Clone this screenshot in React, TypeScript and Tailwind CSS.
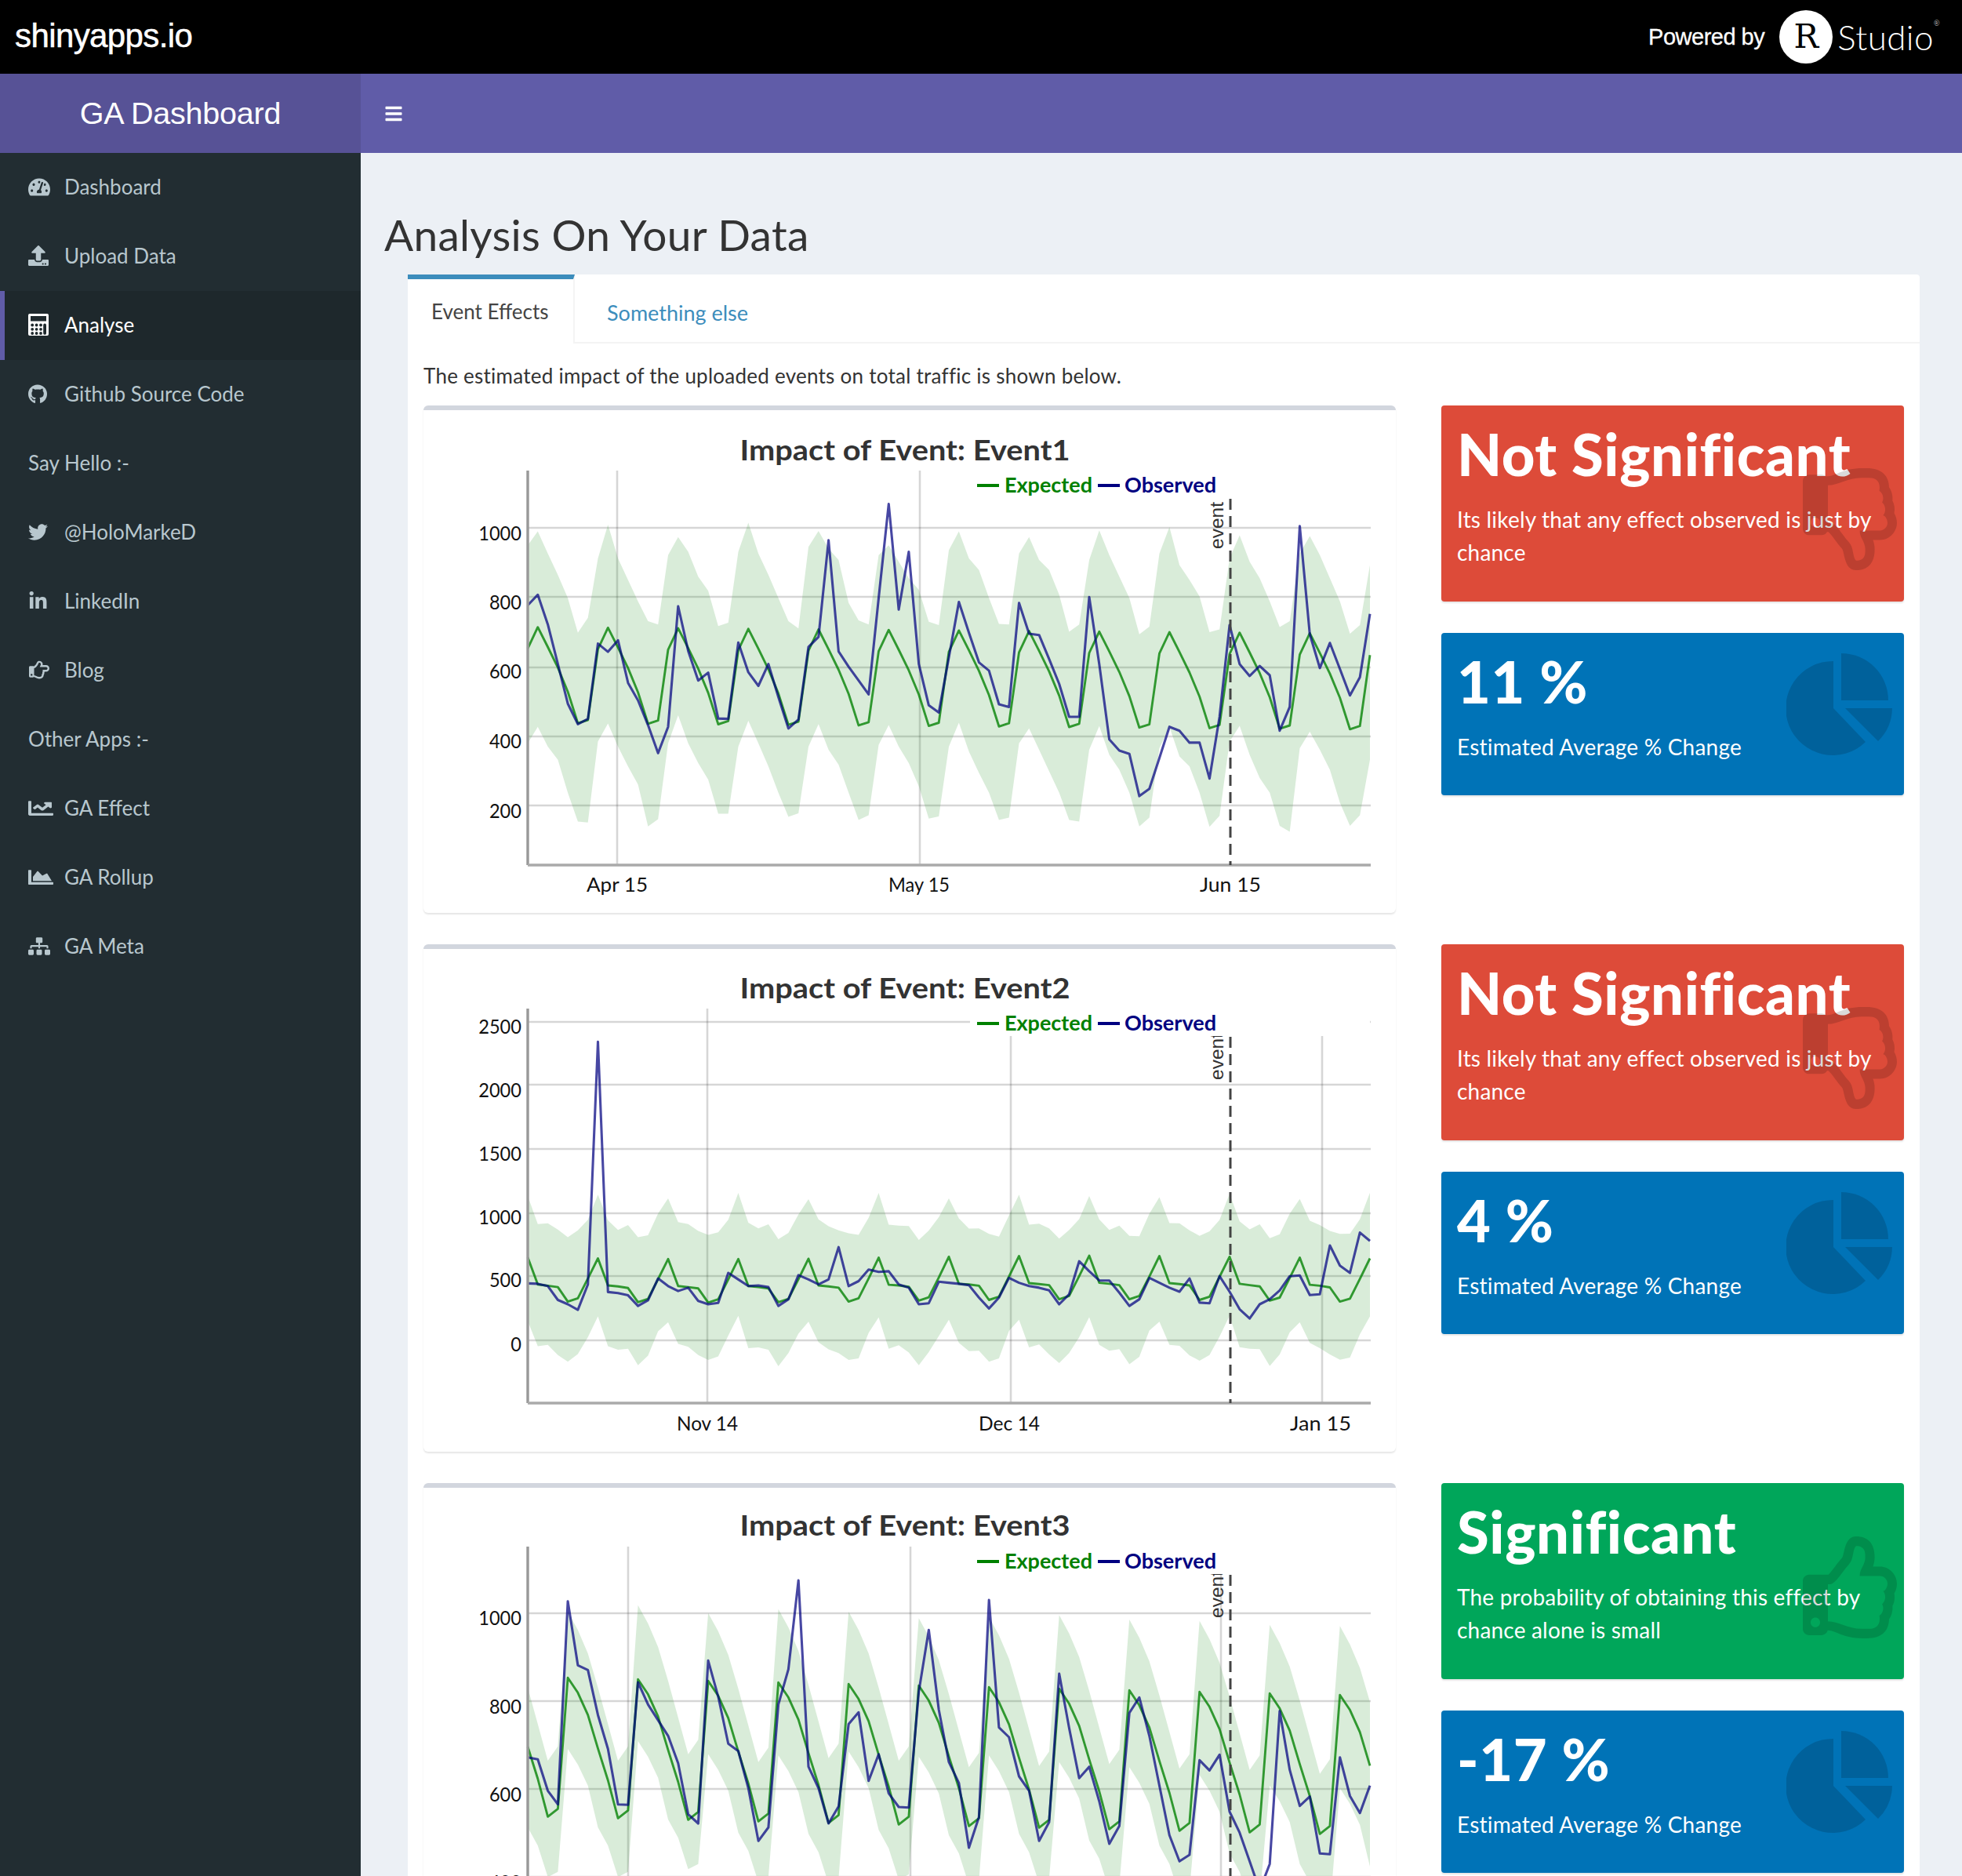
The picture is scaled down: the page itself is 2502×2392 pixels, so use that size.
import type { ReactNode } from "react";
import {
  FaTachometerAlt,
  FaUpload,
  FaGithub,
  FaTwitter,
  FaLinkedinIn,
  FaRegHandPointRight,
  FaChartLine,
  FaChartArea,
  FaSitemap,
  FaBars,
  FaRegThumbsDown,
  FaRegThumbsUp,
} from "react-icons/fa";

// Series were read off the reference, in crop coordinates; each chart maps them to page pixels.
const STEP = 12.786;
const LEFT = 673;

const obs1 = [622, 590, 680, 800, 920, 982, 966, 738, 763, 728, 857, 910, 985, 1070, 990, 625, 760, 850, 826, 965, 966, 735, 825, 866, 800, 900, 995, 968, 748, 718, 425, 762, 808, 850, 892, 600, 315, 635, 460, 800, 925, 947, 780, 612, 705, 795, 820, 922, 930, 615, 708, 712, 785, 860, 960, 960, 597, 800, 1028, 1062, 1072, 1200, 1178, 1085, 990, 1002, 1038, 1038, 1147, 960, 682, 800, 836, 806, 834, 1002, 930, 382, 710, 812, 736, 815, 895, 840, 648];
const up1 = [440, 398, 465, 530, 600, 705, 660, 480, 378, 480, 545, 610, 670, 680, 470, 415, 460, 535, 578, 685, 675, 460, 372, 465, 530, 600, 670, 692, 445, 397, 450, 485, 615, 668, 680, 470, 440, 490, 540, 575, 672, 682, 455, 398, 480, 515, 600, 678, 680, 465, 415, 485, 515, 590, 702, 680, 485, 395, 470, 535, 600, 710, 687, 465, 385, 500, 545, 595, 703, 695, 480, 410, 490, 540, 610, 688, 670, 465, 412, 470, 540, 610, 708, 682, 500];
const low1 = [1040, 990, 1050, 1090, 1190, 1277, 1280, 1035, 980, 1050, 1110, 1165, 1292, 1270, 1040, 955, 1040, 1100, 1150, 1253, 1253, 1050, 972, 1040, 1110, 1190, 1263, 1252, 1050, 982, 1060, 1105, 1190, 1272, 1258, 1045, 985, 1050, 1100, 1170, 1268, 1262, 1050, 978, 1065, 1130, 1190, 1272, 1265, 1040, 995, 1060, 1125, 1190, 1272, 1277, 1060, 988, 1075, 1120, 1190, 1292, 1265, 1055, 990, 1080, 1110, 1190, 1293, 1260, 1035, 987, 1075, 1145, 1190, 1290, 1308, 1055, 1005, 1060, 1120, 1220, 1290, 1258, 1090];
const exp1 = Array.from({ length: 85 }, (_, i) => {
  const peak = 688 + (i / 84) * 20;
  return peak + [0, 60, 122, 195, 290, 280, 65][(i + 6) % 7];
});

const obs2 = [1037, 1038, 1045, 1087, 1100, 1117, 1040, 305, 1063, 1066, 1073, 1105, 1088, 1022, 1045, 1060, 1050, 1090, 1100, 1096, 1005, 1025, 1045, 1043, 1048, 1105, 1085, 1012, 1025, 1040, 1025, 927, 1045, 1030, 995, 1002, 1000, 1040, 1050, 1100, 1097, 1032, 1035, 1038, 1042, 1080, 1113, 1080, 1020, 1035, 1045, 1050, 1058, 1100, 1070, 970, 1000, 1028, 1028, 1065, 1105, 1085, 1020, 1035, 1050, 1062, 1022, 1095, 1097, 1015, 1062, 1115, 1143, 1100, 1085, 1058, 1015, 1013, 1072, 1070, 922, 983, 1005, 883, 908];
const wiggle = (i: number) => Math.round(Math.sin(i * 2.3) * 10);
const exp2 = Array.from({ length: 85 }, (_, i) => [958, 1040, 1043, 1047, 1090, 1080, 1020][i % 7] + Math.round(Math.sin(i / 12) * 5));
const up2 = Array.from({ length: 85 }, (_, i) => [772, 850, 865, 868, 895, 885, 835][i % 7] + wiggle(i));
const low2 = Array.from({ length: 85 }, (_, i) => [1145, 1225, 1232, 1245, 1278, 1255, 1190][i % 7] + wiggle(i + 3));

const obs3 = [1082, 1090, 1210, 1262, 485, 730, 748, 920, 1050, 1262, 1264, 795, 880, 940, 1000, 1105, 1300, 1335, 712, 850, 1030, 1058, 1200, 1402, 1350, 880, 745, 405, 1118, 1200, 1335, 1270, 955, 910, 1172, 1070, 1220, 1272, 1274, 830, 595, 900, 1100, 1180, 1428, 1310, 480, 968, 1005, 1155, 1210, 1402, 1330, 762, 970, 1162, 1118, 1250, 1413, 1345, 912, 853, 1000, 1190, 1380, 1480, 1455, 1093, 1132, 1072, 1290, 1370, 1480, 1590, 1490, 905, 1130, 1268, 1232, 1450, 1453, 1082, 1230, 1295, 1190];
const exp3 = Array.from({ length: 85 }, (_, i) => {
  const week = Math.floor((i + 3) / 7);
  const peak = 772 + week * 6;
  return peak + [0, 57, 142, 270, 392, 537, 507][(i + 3) % 7];
});
const up3 = Array.from({ length: 85 }, (_, i) => {
  const week = Math.floor((i + 3) / 7);
  const peak = [525, 525, 500, 530, 515, 525, 550, 545, 538, 555, 560, 575, 580][week];
  return peak + [0, 70, 160, 290, 430, 570, 515][(i + 3) % 7];
});
const low3 = Array.from({ length: 85 }, (_, i) => {
  const week = Math.floor((i + 3) / 7);
  const peak = [1050, 1050, 1020, 1070, 1075, 1060, 1080, 1075, 1100, 1120, 1150, 1190, 1200][week];
  return peak + [0, 60, 140, 300, 370, 490, 470][(i + 3) % 7];
});

const points = (vals: number[], toY: (z: number) => number) =>
  vals.map((v, i) => `${(LEFT + i * STEP).toFixed(1)},${toY(v).toFixed(1)}`).join(" ");

type ChartProps = {
  title: string;
  top: number;
  plotTop: number;
  plotBottom: number;
  titleBase: number;
  legendY: number;
  toY: (z: number) => number;
  grid: [number, string, number][];
  dates: number[];
  ticks: [number, string][];
  tickY: number;
  eventBase: number;
  upper: number[];
  lower: number[];
  expected: number[];
  observed: number[];
};

function Chart(p: ChartProps) {
  const lowerPts = p.lower.map((v, i) => `${(LEFT + i * STEP).toFixed(1)},${p.toY(v).toFixed(1)}`).reverse().join(" ");
  const bandPts = points(p.upper, p.toY) + " " + lowerPts;
  const lab = "[font-family:Lato,sans-serif]";
  return (
    <svg viewBox={`540 ${p.top + 6} 1240 641`} className="block w-[1240px] h-[641px]">
      <g className="blur-[0.6px]">
        {p.grid.map(([y]) => (
          <line key={y} x1={LEFT} x2={1748} y1={y} y2={y} stroke="#000" strokeOpacity="0.16" strokeWidth="2.6" />
        ))}
        {p.dates.map((x) => (
          <line key={x} x1={x} x2={x} y1={p.plotTop} y2={p.plotBottom} stroke="#000" strokeOpacity="0.16" strokeWidth="2.6" />
        ))}
        <polygon points={bandPts} fill="#008000" fillOpacity="0.15" />
      </g>
      <text transform={`translate(1560 ${p.eventBase}) rotate(-90)`} fill="#333" fontSize="24.5" className="[font-family:'Liberation_Sans',sans-serif]">
        event
      </text>
      <rect x="1237" y={p.plotTop - 2} width="510" height="37" fill="#fff" />
      <g className="blur-[0.5px]">
        <polyline points={points(p.expected, p.toY)} fill="none" stroke="#008000" strokeOpacity="0.78" strokeWidth="2.9" strokeLinejoin="round" />
        <polyline points={points(p.observed, p.toY)} fill="none" stroke="#000080" strokeOpacity="0.72" strokeWidth="3.1" strokeLinejoin="round" />
        <line x1={LEFT} x2={LEFT} y1={p.plotTop} y2={p.plotBottom} stroke="#999" strokeWidth="3.4" />
        <line x1={LEFT} x2={1748} y1={p.plotBottom} y2={p.plotBottom} stroke="#aaa" strokeWidth="3.4" />
        <line x1="1569" x2="1569" y1={p.plotTop + 36} y2={p.plotBottom} stroke="#444" strokeWidth="3" strokeDasharray="14 8" />
      </g>

      <text x="1154" y={p.titleBase} textAnchor="middle" textLength="421" lengthAdjust="spacingAndGlyphs" fill="#333" fontSize="37" fontWeight="700" className={lab}>
        {p.title}
      </text>

      <line x1="1246" x2="1274" y1={p.legendY} y2={p.legendY} stroke="#008000" strokeWidth="4" />
      <text x="1281" y={p.legendY + 9} textLength="112" lengthAdjust="spacingAndGlyphs" fill="#008000" fontSize="26" fontWeight="700" className={lab}>
        Expected
      </text>
      <line x1="1400" x2="1428" y1={p.legendY} y2={p.legendY} stroke="#000080" strokeWidth="4" />
      <text x="1434" y={p.legendY + 9} textLength="117" lengthAdjust="spacingAndGlyphs" fill="#000080" fontSize="26" fontWeight="700" className={lab}>
        Observed
      </text>

      {p.grid.map(([, label, base]) => (
        <text key={label} x="665" y={base} textAnchor="end" textLength={label.length * 13.7} lengthAdjust="spacingAndGlyphs" fill="#111" fontSize="25" className={lab}>
          {label}
        </text>
      ))}
      {p.ticks.map(([x, label]) => (
        <text key={label} x={x} y={p.tickY} textAnchor="middle" textLength="78" lengthAdjust="spacingAndGlyphs" fill="#111" fontSize="25" className={lab}>
          {label}
        </text>
      ))}
    </svg>
  );
}

function ChartBox(props: ChartProps) {
  return (
    <div className="h-[647px] w-[1240px] shrink-0 bg-white rounded-[6px] border-t-[6px] border-[#d2d6de] shadow-[0_2px_2px_rgba(0,0,0,0.1)] overflow-hidden">
      <Chart {...props} />
    </div>
  );
}

function PieIcon() {
  return (
    <svg viewBox="2278 833 135 131" className="absolute right-[15px] top-[26px] w-[135px] h-[131px]" fill="#000" fillOpacity="0.15">
      <path d="M2338 903 L2338 843 A60 60 0 1 0 2379 946 Z" />
      <path d="M2348 893 V833 A60 60 0 0 1 2408 893 Z" />
      <path d="M2353 903 H2413 A60 60 0 0 1 2395 945 Z" />
    </svg>
  );
}

function CalculatorIcon() {
  const dots = [];
  for (const cy of [14.5, 19.8, 25]) {
    for (const cx of [5.2, 10.6, 16]) {
      dots.push(<circle key={`${cx}-${cy}`} cx={cx} cy={cy} r="1.9" />);
    }
  }
  return (
    <svg viewBox="0 0 26 28" className="w-[26px] h-[28px]">
      <rect width="26" height="28" rx="2" fill="#fff" />
      <g fill="#1e282c">
        <rect x="3" y="3" width="20" height="6.5" />
        {dots}
        <rect x="19.2" y="12.6" width="3.8" height="14.2" rx="1.9" />
      </g>
    </svg>
  );
}

function SmallBox({ bg, head, text, height, icon }: { bg: string; head: string; text: string; height: string; icon: ReactNode }) {
  return (
    <div className={`relative rounded-[4px] px-[20px] pt-[20px] text-white shadow-[0_2px_2px_rgba(0,0,0,0.1)] overflow-hidden ${bg} ${height}`}>
      <h3 className="text-[74px] font-black leading-[84px] mb-[20px] whitespace-nowrap tracking-[0.6px]">{head}</h3>
      <p className="text-[28px] leading-[42px] tracking-[0.2px]">{text}</p>
      {icon}
    </div>
  );
}

const thumbDown = <FaRegThumbsDown preserveAspectRatio="none" className="absolute right-[1px] top-[80px] w-[128px] h-[130px] text-black/15" />;
const thumbUp = <FaRegThumbsUp preserveAspectRatio="none" className="absolute right-[1px] top-[68px] w-[128px] h-[130px] text-black/15" />;

function Stats({ sig, text, bg, pct, icon }: { sig: string; text: string; bg: string; pct: string; icon: ReactNode }) {
  return (
    <div className="h-[647px] w-[590px] shrink-0 flex flex-col gap-[40px]">
      <SmallBox bg={bg} head={sig} text={text} height="h-[249.5px]" icon={icon} />
      <SmallBox bg="bg-[#0073b7]" head={pct} text="Estimated Average % Change" height="h-[207px]" icon={<PieIcon />} />
    </div>
  );
}

const navItems: { label: string; icon?: ReactNode; active?: boolean }[] = [
  { label: "Dashboard", icon: <FaTachometerAlt className="w-[28px] h-[25px]" /> },
  { label: "Upload Data", icon: <FaUpload className="w-[26px] h-[26px]" /> },
  { label: "Analyse", icon: <CalculatorIcon />, active: true },
  { label: "Github Source Code", icon: <FaGithub className="w-[24px] h-[25px]" /> },
  { label: "Say Hello :-" },
  { label: "@HoloMarkeD", icon: <FaTwitter className="w-[25px] h-[25px]" /> },
  { label: "LinkedIn", icon: <FaLinkedinIn className="w-[25px] h-[25px]" /> },
  { label: "Blog", icon: <FaRegHandPointRight className="w-[28px] h-[26px]" /> },
  { label: "Other Apps :-" },
  { label: "GA Effect", icon: <FaChartLine preserveAspectRatio="none" className="w-[32px] h-[25px]" /> },
  { label: "GA Rollup", icon: <FaChartArea preserveAspectRatio="none" className="w-[32px] h-[25px]" /> },
  { label: "GA Meta", icon: <FaSitemap className="w-[28px] h-[25px]" /> },
];

export default function App() {
  return (
    <div className="w-[2502px] h-[2392px] overflow-hidden flex flex-col bg-[#ecf0f5] [font-family:Lato,sans-serif]">
      {/* shinyapps banner */}
      <div className="h-[94px] shrink-0 bg-black text-white flex items-center justify-between pl-[19px] pr-[28px] [font-family:'Liberation_Sans',sans-serif]">
        <span className="text-[42px] leading-none tracking-[-0.6px] font-medium [-webkit-text-stroke:0.5px_white] pb-[2px]">shinyapps.io</span>
        <div className="flex items-center">
          <span className="text-[29px] leading-none tracking-[-0.5px] mr-[19px] [-webkit-text-stroke:0.3px_white]">Powered by</span>
          <span className="w-[68px] h-[68px] rounded-full bg-white text-black flex items-center justify-center text-[42px] leading-none [font-family:'DejaVu_Serif',serif]">R</span>
          <span className="ml-[6px] text-[44px] leading-none font-light tracking-[0.4px] [font-family:Lato,sans-serif]">
            Studio<span className="text-[9px] align-top">®</span>
          </span>
        </div>
      </div>

      {/* app header */}
      <div className="h-[101px] shrink-0 flex text-white">
        <div className="w-[460px] bg-[#575296] flex items-center justify-center text-[39.5px] [font-family:'Liberation_Sans',sans-serif] tracking-[-0.2px]">
          GA Dashboard
        </div>
        <div className="flex-1 bg-[#605ca8] flex items-center pl-[30px]">
          <FaBars className="w-[24px] h-[24px]" />
        </div>
      </div>

      <div className="flex flex-1 min-h-0">
        {/* sidebar */}
        <nav className="w-[460px] shrink-0 bg-[#222d32] text-[#b8c7ce] text-[26px]">
          {navItems.map((item) => (
            <div key={item.label} className={`h-[88px] pb-[2px] flex items-center ${item.active ? "bg-[#1e282c] text-white border-l-[6px] border-[#605ca8] pl-[30px]" : "pl-[36px]"}`}>
              {item.icon ? <span className="w-[46px] shrink-0 flex items-center">{item.icon}</span> : null}
              <span>{item.label}</span>
            </div>
          ))}
        </nav>

        {/* content */}
        <main className="flex-1 min-w-0">
          <h1 className="h-[155px] pl-[30px] pt-[75px] text-[55px] leading-[58px] tracking-[0.3px] text-[#333]">Analysis On Your Data</h1>
          <div className="ml-[60px] mr-[54px] bg-white rounded-t-[4px]">
            <div className="h-[88px] flex border-b-2 border-[#f4f4f4]">
              <div className="w-[213px] h-[88px] border-t-[6px] border-r-2 border-[#3c8dbc] [border-right-color:#f4f4f4] bg-white flex items-center pl-[30px] text-[26px] text-[#444]">
                Event Effects
              </div>
              <div className="pl-[41px] pt-[12px] flex items-center text-[27px] text-[#3c8dbc]">Something else</div>
            </div>
            <div className="px-[20px] pt-[21px]">
              <p className="text-[26px] leading-[40px] tracking-[0.25px] text-[#333] mb-[18px]">The estimated impact of the uploaded events on total traffic is shown below.</p>
              <div className="flex flex-col gap-[40px]">
                <div className="flex gap-[58px]">
                  <ChartBox
                    title="Impact of Event: Event1"
                    top={517}
                    plotTop={600}
                    plotBottom={1103}
                    titleBase={587}
                    legendY={619}
                    toY={(z) => 510 + z / 2.376}
                    grid={[[673, "1000", 689], [761, "800", 777], [851, "600", 865], [939, "400", 954], [1027, "200", 1043]]}
                    dates={[787, 1173]}
                    ticks={[[787, "Apr 15"], [1172, "May 15"], [1569, "Jun 15"]]}
                    tickY={1137}
                    eventBase={700}
                    upper={up1}
                    lower={low1}
                    expected={exp1}
                    observed={obs1}
                  />
                  <Stats sig="Not Significant" text="Its likely that any effect observed is just by chance" bg="bg-[#dd4b39]" pct="11 %" icon={thumbDown} />
                </div>
                <div className="flex gap-[58px]">
                  <ChartBox
                    title="Impact of Event: Event2"
                    top={1204}
                    plotTop={1286}
                    plotBottom={1789}
                    titleBase={1273}
                    legendY={1305}
                    toY={(z) => 1200 + z / 2.376}
                    grid={[[1303, "2500", 1318], [1383, "2000", 1399], [1465, "1500", 1480], [1547, "1000", 1561], [1627, "500", 1641], [1709, "0", 1723]]}
                    dates={[902, 1289, 1686]}
                    ticks={[[902, "Nov 14"], [1287, "Dec 14"], [1684, "Jan 15"]]}
                    tickY={1824}
                    eventBase={1377}
                    upper={up2}
                    lower={low2}
                    expected={exp2}
                    observed={obs2}
                  />
                  <Stats sig="Not Significant" text="Its likely that any effect observed is just by chance" bg="bg-[#dd4b39]" pct="4 %" icon={thumbDown} />
                </div>
                <div className="flex gap-[58px]">
                  <ChartBox
                    title="Impact of Event: Event3"
                    top={1891}
                    plotTop={1972}
                    plotBottom={2480}
                    titleBase={1958}
                    legendY={1991}
                    toY={(z) => 1880 + z / 3}
                    grid={[[2057, "1000", 2072], [2169, "800", 2185], [2281, "600", 2297], [2393, "400", 2409]]}
                    dates={[801, 1161, 1557]}
                    ticks={[]}
                    tickY={2500}
                    eventBase={2063}
                    upper={up3}
                    lower={low3}
                    expected={exp3}
                    observed={obs3}
                  />
                  <Stats sig="Significant" text="The probability of obtaining this effect by chance alone is small" bg="bg-[#00a65a]" pct="-17 %" icon={thumbUp} />
                </div>
              </div>
            </div>
          </div>
        </main>
      </div>
    </div>
  );
}
